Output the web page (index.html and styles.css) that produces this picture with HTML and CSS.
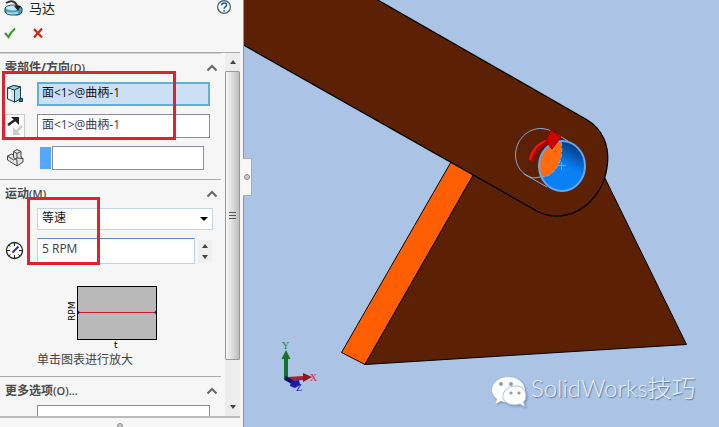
FILE: index.html
```
<!DOCTYPE html>
<html lang="zh-CN">
<head>
    <meta charset="UTF-8">
    <meta name="viewport" content="width=device-width, initial-scale=1.0">
    <title>马达</title>
    <link rel="stylesheet" href="styles.css">
</head>
<body>
    <div class="app">
        <aside class="panel">
            <header class="panel-title">
                <svg class="motor-icon" width="20" height="16" viewBox="0 0 20 16">
                    <path d="M1 8v4q2 3 6 3h7q4-1 4-4V8q-2-3-8-3Q3 5 1 8z" fill="#4d9ab8" stroke="#174a63"/>
                    <ellipse cx="9" cy="8" rx="7" ry="2.5" fill="#c3e6f1"/>
                    <path d="M3 12.5q5 2 11 0" fill="none" stroke="#a5d7e8" stroke-width="2"/>
                    <path d="M2 3q9-5 12 5" fill="none" stroke="#333" stroke-width="2"/>
                    <path d="M10 6h7l-3 5z" fill="#222"/>
                </svg>
                <h1>马达</h1>
                <button class="help" aria-label="帮助">
                    <svg width="16" height="16" viewBox="0 0 16 16">
                        <circle cx="8" cy="7" r="6.4" fill="#f4f8fb" stroke="#45596b" stroke-width="1.2"/>
                        <path d="M5.7 5.2q0-2.3 2.4-2.3t2.4 2q0 1.2-1.2 1.9Q8.1 7.5 8.1 8.7" fill="none" stroke="#1e5c8c" stroke-width="1.5"/>
                        <rect x="7.3" y="10" width="1.6" height="1.6" fill="#1e5c8c"/>
                    </svg>
                </button>
            </header>

            <div class="actions">
                <button aria-label="确定">
                    <svg width="12" height="12" viewBox="0 0 12 12"><path d="M1 6l3.5 4Q7 5 11 1.5" fill="none" stroke="#3b9c27" stroke-width="2.2"/></svg>
                </button>
                <button aria-label="取消">
                    <svg width="12" height="12" viewBox="0 0 12 12"><path d="M2 2l8 8.5M10 1.5L2 10.5" fill="none" stroke="#cc2a12" stroke-width="2.2"/></svg>
                </button>
            </div>

            <div class="panel-body">
                <div class="groups">
                    <section class="group">
                        <div class="group-head">
                            <h2>零部件/方向<span>(D)</span></h2>
                            <button aria-label="折叠"><svg width="12" height="8" viewBox="0 0 12 8"><path d="M1.5 6.5L6 2l4.500 4.5"/></svg></button>
                        </div>
                        <div class="line">
                            <label class="icon" for="face" aria-label="马达位置">
                                <svg width="20" height="20" viewBox="0 0 20 20" stroke="#173f4e" stroke-linejoin="round">
                                    <path d="M2.5 4l6-2.500 7 1.500v12l-6 3-7-3z" fill="#d4ebf2"/>
                                    <path d="M2.5 4l6-2.500 7 1.500-6 3z" fill="#9fcfdd"/>
                                    <path d="M9.500 6l6-3v12l-6 3z" fill="#b4dae5"/>
                                    <path d="M5 5v10" stroke="#fff" stroke-width="2"/>
                                    <rect x="14.500" y="14.500" width="3" height="3" fill="#2a7892"/>
                                </svg>
                            </label>
                            <input class="field active" id="face" type="text" value="面&lt;1&gt;@曲柄-1">
                        </div>
                        <div class="line">
                            <button class="icon flip" aria-label="反向">
                                <svg width="18" height="20" viewBox="0 0 18 20">
                                    <path d="M2 9l7-5" stroke="#222" stroke-width="2.5"/>
                                    <path d="M5 1h8v8z" fill="#222"/>
                                    <path d="M16 10l-6 6" stroke="#ccc" stroke-width="2.5"/>
                                    <path d="M7 11v8h8z" fill="#ccc"/>
                                </svg>
                            </button>
                            <input class="field" type="text" aria-label="马达方向" value="面&lt;1&gt;@曲柄-1">
                        </div>
                        <div class="line">
                            <label class="icon" for="relative" aria-label="相对零部件">
                                <svg width="20" height="20" viewBox="0 0 20 20" stroke="#444" stroke-linejoin="round">
                                    <path d="M2.500 8l4-2 2 1V3.500l3.500-2 4 2V9l2 1.500V14l-6 4-9.500-6z" fill="#e2e2e2"/>
                                    <path d="M8.500 3.500l3.500 2V10l6 .5M12 5.500l4-2M8.500 7v2.500L12 12v6M2.500 8l6 4 3.500-2" fill="none"/>
                                </svg>
                            </label>
                            <span class="swatch"></span>
                            <input class="field short" id="relative" type="text">
                        </div>
                        <div class="mark mark-face"></div>
                    </section>

                    <section class="group">
                        <div class="group-head">
                            <h2>运动<span>(M)</span></h2>
                            <button aria-label="折叠"><svg width="12" height="8" viewBox="0 0 12 8"><path d="M1.5 6.5L6 2l4.500 4.5"/></svg></button>
                        </div>
                        <div class="line">
                            <div class="icon"></div>
                            <select class="motion" aria-label="运动类型">
                                <option>等速</option>
                            </select>
                        </div>
                        <div class="line">
                            <label class="icon" for="speed" aria-label="速度">
                                <svg width="20" height="20" viewBox="0 0 20 20">
                                    <circle cx="9.500" cy="9.500" r="8" fill="#fff" stroke="#222" stroke-width="1.3"/>
                                    <path d="M9.500 2v3M9.500 14v3M2 9.500h3M14 9.500h3M4 4l1.500 1.500M4 15l1.500-1.500M13.500 13.500L15 15" stroke="#222"/>
                                    <path d="M7.500 11.500l6-6" stroke="#2432b4" stroke-width="2"/>
                                </svg>
                            </label>
                            <input class="field speed" id="speed" type="text" value="5 RPM">
                            <div class="spin">
                                <button aria-label="增加"><svg width="6" height="4" viewBox="0 0 6 4"><path d="M0 4l3-4 3 4z"/></svg></button>
                                <button aria-label="减少"><svg width="6" height="4" viewBox="0 0 6 4"><path d="M0 0l3 4 3-4z"/></svg></button>
                            </div>
                        </div>
                        <figure class="chart">
                            <svg width="92" height="64" viewBox="0 0 92 64">
                                <rect x="11.5" y="1.5" width="79" height="53" fill="#b9b9b9" stroke="#000"/>
                                <rect x="12" y="27" width="78" height="1" fill="#d01525"/>
                                <path d="M12 25.5l2 2-2 2zM90 25.5l-2 2 2 2z" fill="#1c1ca8"/>
                                <text x="-36" y="9" transform="rotate(-90)">RPM</text>
                                <text x="48" y="63">t</text>
                            </svg>
                            <figcaption>单击图表进行放大</figcaption>
                        </figure>
                        <div class="mark mark-speed"></div>
                    </section>

                    <section class="group">
                        <div class="group-head">
                            <h2>更多选项<span>(O)...</span></h2>
                            <button aria-label="折叠"><svg width="12" height="8" viewBox="0 0 12 8"><path d="M1.5 6.5L6 2l4.500 4.5"/></svg></button>
                        </div>
                        <div class="line">
                            <div class="icon"></div>
                            <input class="field" type="text" aria-label="更多选项">
                        </div>
                    </section>
                </div>

                <div class="scrollbar">
                    <button aria-label="向上滚动"><svg width="6" height="4" viewBox="0 0 6 4"><path d="M0 4l3-4 3 4z"/></svg></button>
                    <div class="thumb"><i></i><i></i><i></i></div>
                    <div class="track"></div>
                    <button aria-label="向下滚动"><svg width="6" height="4" viewBox="0 0 6 4"><path d="M0 0l3 4 3-4z"/></svg></button>
                </div>
            </div>

            <footer class="panel-foot"><span class="dot"></span></footer>
        </aside>

        <main class="view">
            <button class="tab" aria-label="隐藏面板"><span class="dot"></span></button>
            <svg class="scene" viewBox="244 0 475 427" preserveAspectRatio="xMinYMin slice">
                <defs>
                    <linearGradient id="bore" x1="0.8" y1="0" x2="0.4" y2="0.8">
                        <stop offset="0.1" stop-color="#003a80"/>
                        <stop offset="0.6" stop-color="#0a80f5"/>
                    </linearGradient>
                </defs>

                <!-- base -->
                <g stroke="#000" stroke-linejoin="round">
                    <path d="M451 162L341.5 352.5 365 364.5 475 172z" fill="#ff5f00"/>
                    <path d="M475 172L365 364.5 686.5 344.5 600 168z" fill="#5c2005"/>
                </g>

                <!-- crank -->
                <path d="M240 -21L376 -1 586.5 119.5C603 129 609 146 607.5 163C605 193 583 216 556 216Q545 216 535 210L240 43z" fill="#5c2005" stroke="#000" stroke-width="1.3"/>

                <!-- hole -->
                <g fill="none" stroke="#82a9dc">
                    <path d="M533 178C522 175 515.5 166 515.5 155C516 139 528 128 542 128.5Q549 129 553 132L568 141"/>
                    <path d="M524 174L547 187M533 178l8-1"/>
                </g>
                <ellipse cx="562" cy="166" rx="23" ry="25" fill="url(#bore)"/>
                <path d="M561 142Q564 160 554 171Q549 177 541 177Q534 155 553 143z" fill="#ff6a0d"/>
                <path d="M561 142Q564 160 554 171Q549 177 541 177" fill="none" stroke="#83aedf" stroke-dasharray="4 2"/>
                <ellipse cx="562" cy="166" rx="23" ry="25" fill="none" stroke="#62a8f3" stroke-width="2"/>
                <path d="M558 165.5h8M561.5 162v8" stroke="#58a9f8"/>
                <path d="M531 161Q534 146 549 141" fill="none" stroke="#a90505" stroke-width="5"/>
                <path d="M530 160Q533 145 548 140" fill="none" stroke="#f21717" stroke-width="2"/>
                <path d="M551 130l10 7-9 12-6-8z" fill="#ce0404" stroke="#960000"/>

                <!-- triad -->
                <path d="M286 379V356" stroke="#11732d" stroke-width="4"/>
                <path d="M286 350l4.500 9h-9z" fill="#17702b"/>
                <path d="M287 379l17-1" stroke="#ad2028" stroke-width="4"/>
                <path d="M303 373l9 4-9 5z" fill="#8e1720"/>
                <path d="M285 378l9 5" stroke="#10106d" stroke-width="4"/>
                <path d="M291 381l8-1 1 5-5 3-5-2z" fill="#1b1ba8"/>
                <g class="axis">
                    <text x="282" y="349" fill="#16803b">Y</text>
                    <text x="310" y="381" fill="#e02045">X</text>
                    <text x="296" y="391" fill="#1b1ba8">Z</text>
                </g>

                <!-- logo -->
                <g class="logo">
                    <path d="M508.5 377C499 377 492 383 492 390Q492 395 497 399L495.5 404 501 401Q505 403 509 402C517 402 525 397 525 390S518 377 508.5 377z"/>
                    <path class="bubble" d="M515.5 386C508 386 503 391 503 396.5S509 405 516 405L520 404 525 407 523.5 402Q526 400 526 396C526 390 522 386 515.5 386z"/>
                    <g class="eyes">
                        <circle cx="501" cy="384" r="2"/>
                        <circle cx="511" cy="384" r="2"/>
                        <circle cx="511" cy="393" r="1.6"/>
                        <circle cx="519" cy="393" r="1.6"/>
                    </g>
                </g>
                <text class="brand" x="531" y="397">SolidWorks技巧</text>
            </svg>
        </main>
    </div>
</body>
</html>
```
FILE: styles.css
```
* {
    box-sizing: border-box;
}

body {
    margin: 0;
    font-family: "Open Sans", "Noto Sans CJK SC", sans-serif;
    font-size: 12px;
    color: #222;
}

button {
    padding: 0;
    border: none;
    background: none;
    display: flex;
    align-items: center;
    justify-content: center;
    cursor: pointer;
}

h1, h2, figure {
    margin: 0;
}

svg {
    display: block;
}

.app {
    display: flex;
    height: 100vh;
}

.panel {
    flex: 0 0 34%;
    min-width: 220px;
    display: flex;
    flex-direction: column;
    background-color: #f6f6f6;
    border-right: 1px solid #8e98a5;
    padding-right: 3px;
}

.panel-title {
    display: flex;
    align-items: center;
    gap: 5px;
    height: 16px;
    padding: 0 8px 0 4px;
}

.panel-title h1 {
    flex: 1;
    font-family: "Noto Sans CJK SC", sans-serif;
    font-size: 13px;
    font-weight: normal;
    line-height: 16px;
}

.actions {
    display: flex;
    gap: 16px;
    height: 36px;
    padding: 0 0 2px 4px;
}

/* groups */

.panel-body {
    flex: 1;
    min-height: 0;
    display: flex;
    border-top: 1px solid #aaa;
}

.groups {
    flex: 1;
    min-width: 0;
    overflow: hidden;
    padding-right: 4px;
}

.group {
    position: relative;
    padding-bottom: 1px;
    border-top: 1px solid #aaa;
}

.group:first-child {
    border-top-color: #d0d0d0;
}

.group-head {
    display: flex;
    align-items: center;
    justify-content: space-between;
    height: 28px;
    padding: 0 3px 0 5px;
}

.group-head h2 {
    font-size: 12px;
    line-height: 16px;
    color: #4a4a4a;
}

.group-head h2 span {
    font-size: 11px;
    font-weight: 600;
}

.group-head path {
    fill: none;
    stroke: #666;
    stroke-width: 2;
}

.line {
    display: flex;
    align-items: center;
    padding: 0 11px 8px 5px;
}

.icon {
    flex: 0 0 20px;
    margin-right: 12px;
}

.flip {
    height: 24px;
    border: 1px solid #ccc;
    background-color: #fff;
}

.field {
    flex: 1;
    min-width: 0;
    height: 24px;
    padding: 0 4px 4px;
    border: 1px solid #8c8c98;
    background-color: #fff;
    font: inherit;
    color: #3b3b52;
}

.field.active {
    border: 2px solid #5fb1dc;
    padding: 0 3px 4px;
    background-color: #cce0f5;
    color: #111;
}

.swatch {
    width: 11px;
    height: 22px;
    margin: 0 1px 0 3px;
    background-color: #52a8ff;
}

.field.short {
    margin-right: 6px;
}

.motion {
    flex: 1;
    height: 22px;
    margin-right: -3px;
    padding: 0 4px 3px;
    border: 1px solid #c3d5e3;
    border-radius: 0;
    appearance: none;
    background: #fff url("data:image/svg+xml,%3Csvg xmlns='http://www.w3.org/2000/svg' viewBox='0 0 8 4'%3E%3Cpath d='M0 0h8L4 4z'/%3E%3C/svg%3E") no-repeat right 4px center / 8px 4px;
    font: inherit;
    color: #111;
}

.field.speed {
    height: 26px;
    padding-bottom: 5px;
    border-color: #5a8fbd #b9d3e3 #b9d3e3;
}

.spin {
    width: 14px;
    margin: 0 -2px 0 3px;
}

.spin button {
    width: 14px;
    height: 11px;
    background-color: #efefef;
}

.spin path,
.scrollbar path {
    fill: #444;
}

.chart {
    padding: 13px 0 6px;
}

.chart svg {
    margin-left: 66px;
}

.chart text {
    font: 9px "DejaVu Sans", sans-serif;
}

.chart figcaption {
    padding-left: 37px;
    margin-top: 2px;
    line-height: 18px;
    color: #444;
}

/* red callouts over the fields */

.mark {
    position: absolute;
    border: 3px solid #dc2430;
    pointer-events: none;
}

.mark-face {
    top: 17px;
    left: 2px;
    right: 45px;
    height: 69px;
}

.mark-speed {
    top: 17px;
    left: 27px;
    width: 73px;
    height: 68px;
}

/* scrollbar */

.scrollbar {
    width: 15px;
    display: flex;
    flex-direction: column;
    background-color: #ededed;
}

.scrollbar button {
    height: 18px;
}

.thumb {
    flex: 15;
    display: flex;
    flex-direction: column;
    align-items: center;
    justify-content: center;
    gap: 2px;
    border: 1px solid #999;
    border-radius: 1px;
    background: linear-gradient(to right, #f6f6f6, #dcdcdc 50%, #bdbdbd);
}

.thumb i {
    width: 7px;
    height: 1px;
    background-color: #555;
}

.track {
    flex: 2;
}

.panel-foot {
    display: flex;
    justify-content: center;
    height: 11px;
    padding-top: 5px;
    border-top: 2px solid #bbb;
    overflow: hidden;
}

.dot {
    flex: none;
    width: 6px;
    height: 6px;
    border: 1px solid #888;
    border-radius: 50%;
    background-color: #ccc;
}

/* model view */

.view {
    position: relative;
    flex: 1;
    min-width: 0;
    background-color: #abc3e5;
}

.scene {
    width: 100%;
    height: 100%;
}

.tab {
    position: absolute;
    top: 37%;
    left: -1px;
    width: 9px;
    height: 38px;
    border: 1px solid #a4acb8;
    border-left: none;
    background-color: #f8f8f8;
}

.axis {
    font: 10px "Liberation Serif", serif;
}

.logo {
    fill: #fff;
    filter: drop-shadow(1px 1px 1px #7188a8);
}

.bubble {
    stroke: #abc3e5;
    stroke-width: 1px;
}

.eyes {
    fill: #8c9db5;
}

.brand {
    font: 300 24px Lato, "Noto Sans CJK SC", sans-serif;
    fill: #e6eefa;
    text-shadow: 1px 1px 1px #5d7596;
}
```
